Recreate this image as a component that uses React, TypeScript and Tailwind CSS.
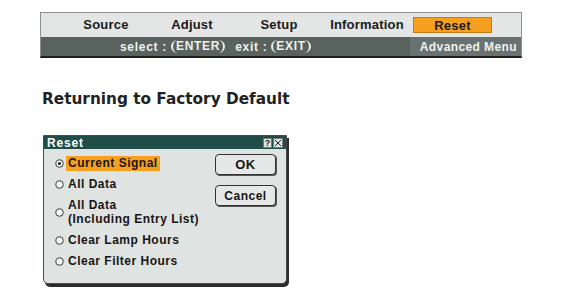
import React from "react";

const Radio = ({ checked }: { checked?: boolean }) => (
  <svg width="9" height="9" viewBox="0 0 9 9" className="shrink-0">
    <circle cx="4.5" cy="4.5" r="3.8" fill="#f4f6f5" stroke="#3a3a3a" strokeWidth="1" />
    <path d="M1.5 6.5 A3.6 3.6 0 0 1 6.5 1.5" fill="none" stroke="#888" strokeWidth="0.8" />
    {checked && <circle cx="4.5" cy="4.5" r="1.6" fill="#1a1a1a" />}
  </svg>
);

export default function App() {
  return (
    <div className="w-[562px] h-[300px] bg-white pl-[40px] pt-[12px] flex flex-col font-['Liberation_Sans',Arial,sans-serif]">
      {/* Menu bar */}
      <div className="w-[482px] flex flex-col border border-[#8c918e] border-b-[2px] border-b-[#1e1e1e]">
        <div className="h-[24px] bg-[#e3e6e4] flex items-center text-[13px] font-bold text-[#1a1a1a] pl-[20px] tracking-[0.2px]">
          <div className="w-[90px] text-center">Source</div>
          <div className="w-[82px] text-center">Adjust</div>
          <div className="w-[92px] text-center">Setup</div>
          <div className="w-[84px] text-center">Information</div>
          <div className="ml-[4px] w-[79px] h-[16px] bg-[#f7a01f] border border-[#c77a10] flex items-center justify-center leading-none">
            Reset
          </div>
        </div>
        <div className="h-[19px] bg-[#59625f] flex items-center text-[12px] font-bold text-[#eef1ee] tracking-[0.7px]">
          <div className="pl-[79px] flex items-center">
            <span>select :</span>
            <span className="ml-[4px] px-[3px] h-[13px] leading-[13px] rounded-full border-l-[2px] border-r-[2px] border-[#eef1ee]">ENTER</span>
            <span className="ml-[10px]">exit :</span>
            <span className="ml-[4px] px-[3px] h-[13px] leading-[13px] rounded-full border-l-[2px] border-r-[2px] border-[#eef1ee]">EXIT</span>
          </div>
          <div className="ml-auto h-full bg-[#697270] flex items-center pl-[10px] pr-[4px] tracking-[0.4px]">Advanced Menu</div>
        </div>
      </div>

      {/* Heading */}
      <div className="mt-[32px] ml-[2px] h-[19px] leading-[19px] text-[15.3px] font-bold text-[#222] font-['DejaVu_Sans',sans-serif]">
        Returning to Factory Default
      </div>

      {/* Dialog */}
      <div className="mt-[26px] ml-[3px] w-[244px] h-[149px] flex flex-col border border-[#4a4a4a] rounded-b-[5px] bg-[#dfe3e1] shadow-[2px_3px_0_#2b2b2b]">
        <div className="h-[13px] bg-[#1f4e48] flex items-center pl-[3px] text-white text-[12px] font-bold leading-none tracking-[0.8px]">
          <span>Reset</span>
          <div className="ml-auto mr-[3px] flex gap-[1px]">
            <div className="w-[9px] h-[10px] bg-[#dfe3e1] border border-[#777] text-[#1f1f1f] text-[9px] leading-[8px] tracking-normal flex items-center justify-center">?</div>
            <div className="w-[10px] h-[10px] bg-[#dfe3e1] border border-[#777] flex items-center justify-center">
              <svg width="8" height="8" viewBox="0 0 8 8">
                <path d="M1 1 L7 7 M7 1 L1 7" stroke="#222" strokeWidth="1" />
              </svg>
            </div>
          </div>
        </div>
        <div className="flex flex-1 text-[12px] font-bold text-[#161616] tracking-[0.5px]">
          <div className="flex-1 flex flex-col pl-[11px] pt-[7px]">
            <div className="h-[15px] flex items-center">
              <Radio checked />
              <span className="ml-[2px] px-[2px] h-[15px] leading-[15px] bg-[#f7a01f]">Current Signal</span>
            </div>
            <div className="mt-[6px] h-[14px] flex items-center">
              <Radio />
              <span className="ml-[2px] px-[2px] leading-[14px]">All Data</span>
            </div>
            <div className="mt-[7px] h-[28px] flex items-center">
              <Radio />
              <span className="ml-[2px] px-[2px] leading-[14px]">
                All Data
                <br />
                (Including Entry List)
              </span>
            </div>
            <div className="mt-[7px] h-[14px] flex items-center">
              <Radio />
              <span className="ml-[2px] px-[2px] leading-[14px]">Clear Lamp Hours</span>
            </div>
            <div className="mt-[7px] h-[14px] flex items-center">
              <Radio />
              <span className="ml-[2px] px-[2px] leading-[14px]">Clear Filter Hours</span>
            </div>
          </div>
          <div className="flex flex-col pr-[10px] pt-[5px]">
            <div className="w-[61px] h-[21px] rounded-[4px] border border-[#333] bg-[#e5e8e6] shadow-[1px_1px_0_#555] flex items-center justify-center text-[13px]">
              OK
            </div>
            <div className="mt-[10px] w-[61px] h-[21px] rounded-[4px] border border-[#333] bg-[#e5e8e6] shadow-[1px_1px_0_#555] flex items-center justify-center text-[12px]">
              Cancel
            </div>
          </div>
        </div>
      </div>
    </div>
  );
}
